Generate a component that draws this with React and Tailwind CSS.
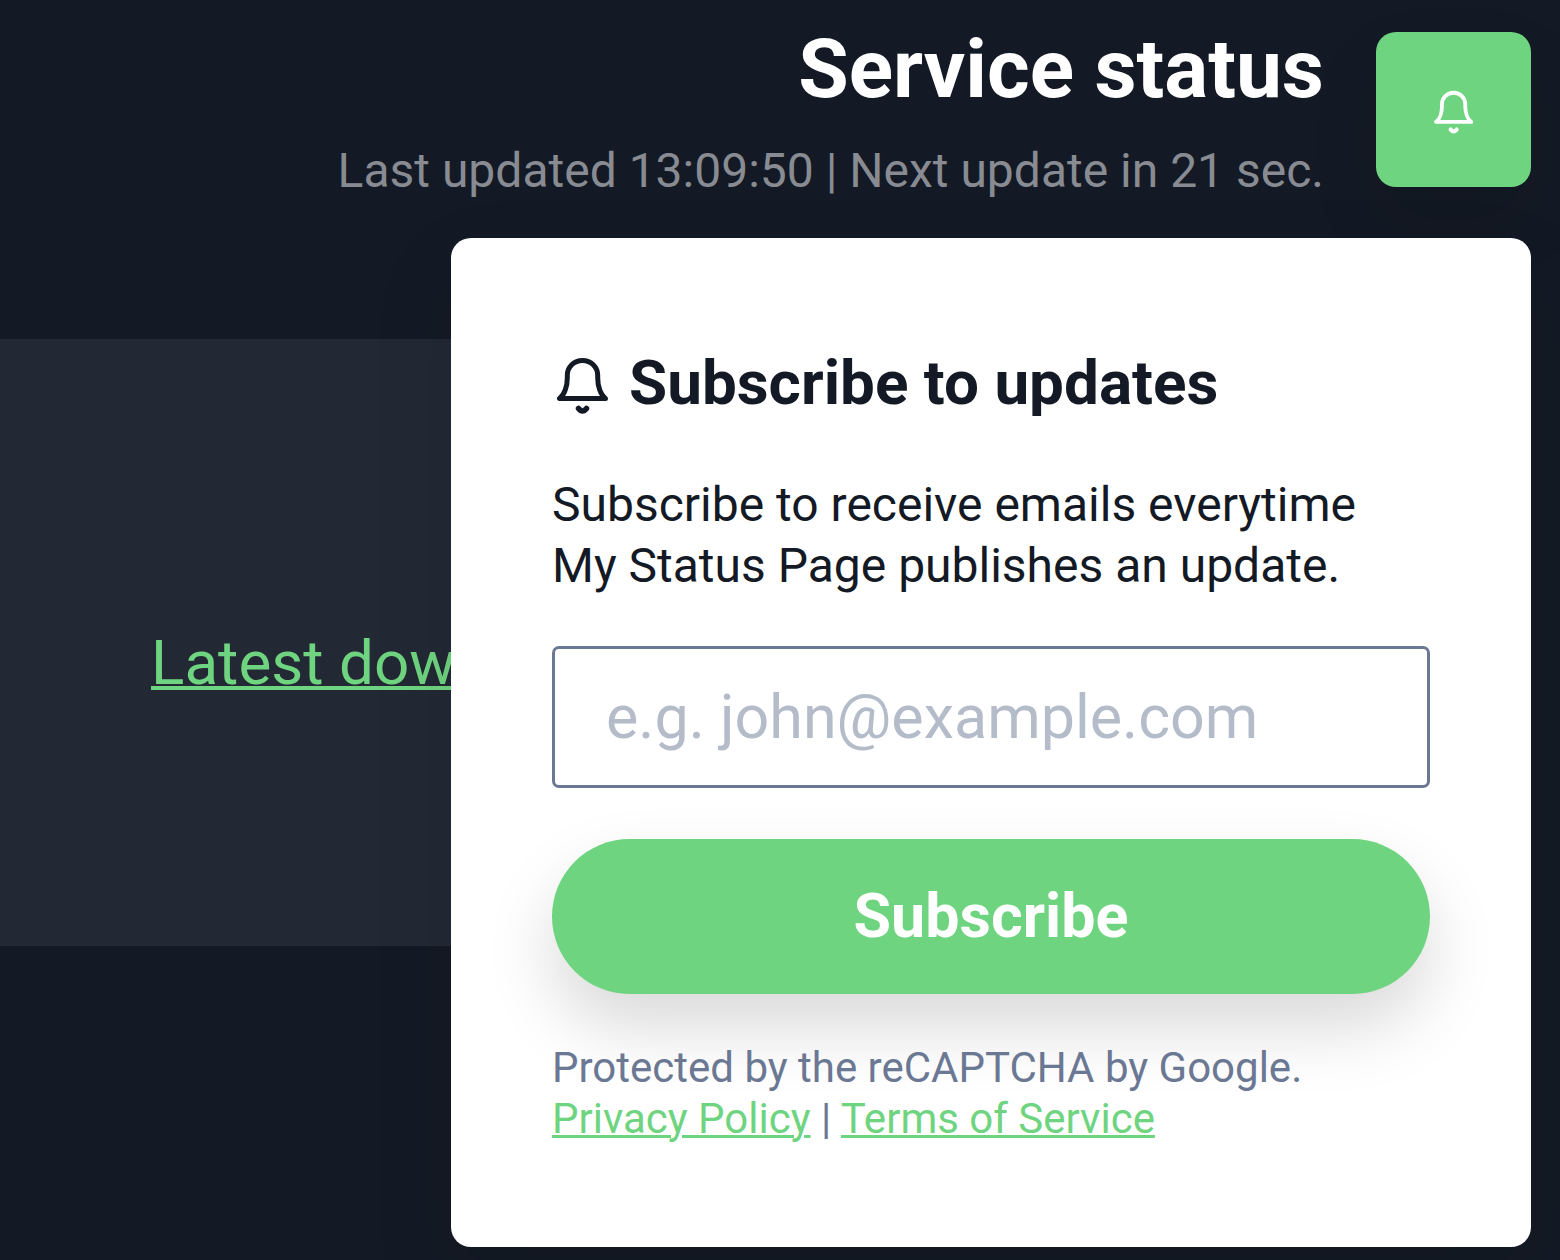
function Bell({ className }) {
  return (
    <svg
      viewBox="1 -2 54 60"
      overflow="visible"
      fill="none"
      stroke="currentColor"
      strokeWidth="5"
      strokeLinecap="round"
      strokeLinejoin="round"
      className={className}
      aria-hidden="true"
    >
      <path d="M4.500 43.500H50.500C45.500 40 42.700 31 42.700 23V20.500C42.700 12 36 5.500 27.500 5.500S12.300 12 12.300 20.500V23C12.300 31 9.500 40 4.500 43.500Z" />
      <path d="M23.500 53.500Q27.500 58.500 31.500 53.500" strokeWidth="5.5" />
    </svg>
  );
}

export default function App() {
  return (
    <div className="relative min-h-screen overflow-hidden bg-[#141a25] font-['Roboto',sans-serif]">
      <header className="relative z-10 flex items-start justify-end gap-[52px] pt-8 pr-[29px] text-right">
        <div>
          <h1 className="text-[82px] leading-[74px] font-bold text-white">Service status</h1>
          <p className="mt-[30px] text-[48px] leading-[70px] text-[#888b92]">
            Last updated 13:09:50 | Next update in 21 sec.
          </p>
        </div>
        <div className="relative">
          <button
            type="button"
            aria-label="Subscribe to updates"
            className="flex size-[155px] items-center justify-center rounded-[20px] bg-[#6fd47f] text-white shadow-[0_34px_68px_rgba(0,0,0,0.1)]"
          >
            <Bell className="h-[46px] w-[42px]" />
          </button>
          <section className="absolute top-full right-0 mt-[51px] w-[1080px] rounded-[20px] bg-white px-[101px] pt-[101px] pb-[103px] text-left text-[#141a25] shadow-[0_34px_84px_rgba(0,0,0,0.1)]">
            <h2 className="flex items-center gap-[19px] text-[62px] leading-[88px] font-bold">
              <Bell className="ml-1 h-[60px] w-[54px]" />
              Subscribe to updates
            </h2>
            <p className="mt-[47px] text-[48px] leading-[61px]">
              Subscribe to receive emails everytime My Status Page publishes an update.
            </p>
            <form onSubmit={(e) => e.preventDefault()}>
              <input
                type="email"
                aria-label="Email address"
                placeholder="e.g. john@example.com"
                className="mt-[50px] block h-[142px] w-full rounded-[7px] border-3 border-[#6b7893] px-[51px] text-[61px] placeholder:text-[#b4bbc9]"
              />
              <button
                type="submit"
                className="mt-[51px] block h-[155px] w-full rounded-full bg-[#6fd47f] text-[61px] font-bold text-white shadow-[0_34px_68px_rgba(0,0,0,0.15)]"
              >
                Subscribe
              </button>
            </form>
            <p className="relative mt-12 text-[42px] leading-[51px] text-[#6b7893]">
              Protected by the reCAPTCHA by Google.
              <br />
              <a href="#privacy" className="text-[#6fd47f] underline decoration-3">Privacy Policy</a> |{" "}
              <a href="#terms" className="text-[#6fd47f] underline decoration-3">Terms of Service</a>
            </p>
          </section>
        </div>
      </header>
      <main className="mt-[133px] mr-[101px] flex h-[607px] items-center bg-[#222935] pt-10 pl-[151px]">
        <a href="#downtime" className="text-[62px] text-[#6fd47f] underline decoration-4">
          Latest downtime
        </a>
      </main>
    </div>
  );
}
